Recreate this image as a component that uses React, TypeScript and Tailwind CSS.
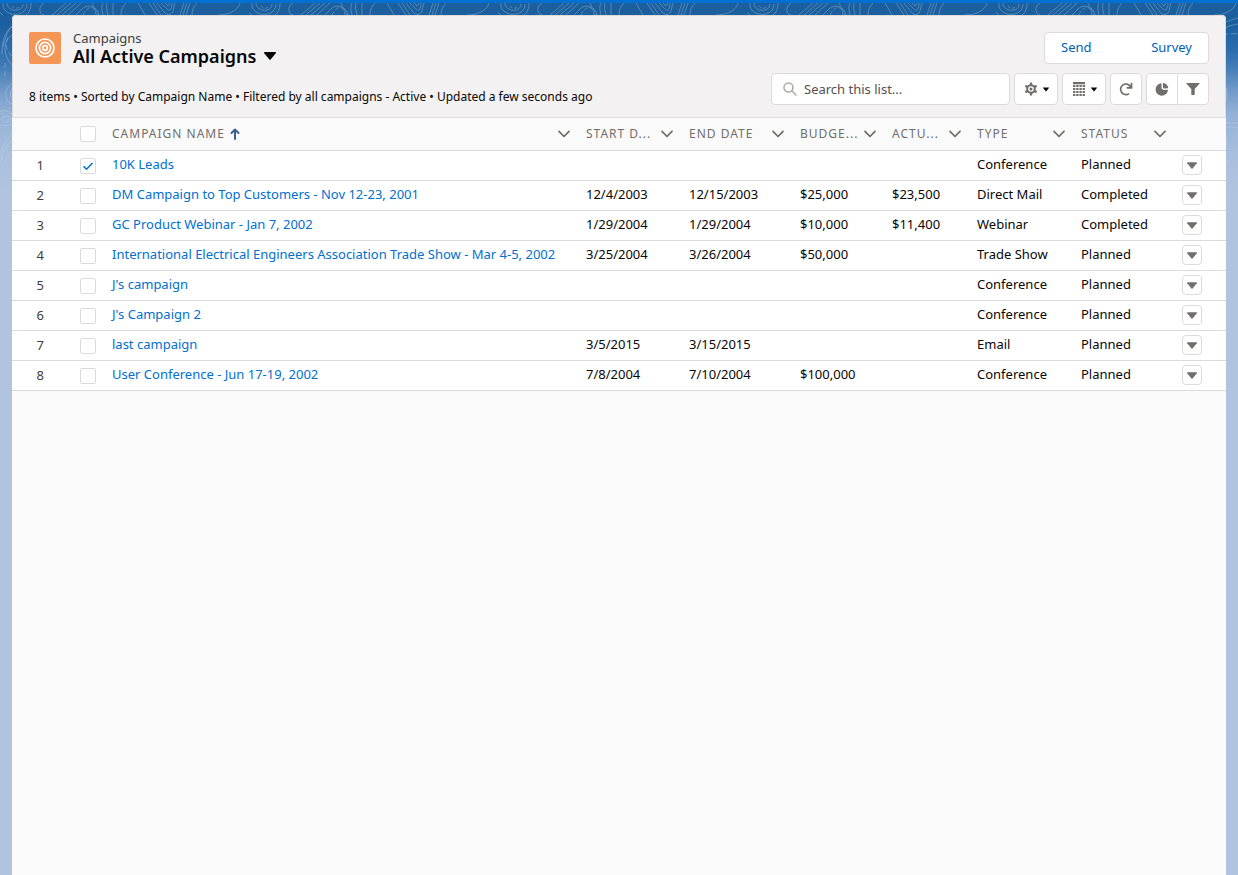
import { useState } from "react"

type Campaign = {
  name: string
  start?: string
  end?: string
  budgeted?: string
  actual?: string
  type: string
  status: string
}

const CAMPAIGNS: Campaign[] = [
  { name: "10K Leads", type: "Conference", status: "Planned" },
  {
    name: "DM Campaign to Top Customers - Nov 12-23, 2001",
    start: "12/4/2003",
    end: "12/15/2003",
    budgeted: "$25,000",
    actual: "$23,500",
    type: "Direct Mail",
    status: "Completed",
  },
  {
    name: "GC Product Webinar - Jan 7, 2002",
    start: "1/29/2004",
    end: "1/29/2004",
    budgeted: "$10,000",
    actual: "$11,400",
    type: "Webinar",
    status: "Completed",
  },
  {
    name: "International Electrical Engineers Association Trade Show - Mar 4-5, 2002",
    start: "3/25/2004",
    end: "3/26/2004",
    budgeted: "$50,000",
    type: "Trade Show",
    status: "Planned",
  },
  { name: "J's campaign", type: "Conference", status: "Planned" },
  { name: "J's Campaign 2", type: "Conference", status: "Planned" },
  { name: "last campaign", start: "3/5/2015", end: "3/15/2015", type: "Email", status: "Planned" },
  {
    name: "User Conference - Jun 17-19, 2002",
    start: "7/8/2004",
    end: "7/10/2004",
    budgeted: "$100,000",
    type: "Conference",
    status: "Planned",
  },
]

const COLUMNS = [
  { label: "Campaign Name", width: "", sorted: true },
  { label: "Start D...", width: "w-[103px]" },
  { label: "End Date", width: "w-[111px]" },
  { label: "Budge...", width: "w-[92px]" },
  { label: "Actu...", width: "w-[85px]" },
  { label: "Type", width: "w-[104px]" },
  { label: "Status", width: "w-[101px]" },
]

const BUTTON = "flex h-8 items-center justify-center rounded border border-[#dddbda] bg-white text-[#706e6b]"

function Topography() {
  return (
    <svg className="absolute inset-x-0 top-0 h-[220px] w-full" aria-hidden>
      <defs>
        <pattern id="topo" width="249" height="220" patternUnits="userSpaceOnUse">
          <g fill="none" stroke="#ffffff" strokeOpacity="0.3" strokeWidth="0.8">
            <path d="M3 0c-2 14 24 16 24 1M7 0c0 9 16 10 16 1M31 0c0 6-2 10-5 12M-2 5c1 4 3 6 5 7" />
            <path d="M12 3c2 3 6 3 8 0" strokeDasharray="3 2" />
            <path d="M44 0c-7 4-4 12 0 12M52 12 66 0M57 12 71 0M62 12 76 0M68 12 81 0M76 12l5-5c6-7 16-4 18 5" />
            <path d="M83 12c4-9 12-11 13 0M92 0l6 12" strokeDasharray="4 2" />
            <path d="M103 0c-2 4-1 8 0 12M107 0c-1 4 0 8 1 12M113 0v12M126 0c-4 4-5 8-5 12M138 0l7 12" />
            <path d="M149 0l8 12M153 0l8 12M157 0l7 9c4 4 7 3 9-1l2-8M161 0l6 6c3 3 5 0 5-6M165 0l3 3 2-3" />
            <path d="M184 0l-4 12M187 0l-4 12M190 0l-4 12M197 0c-3 3-5 7-5 12M218 12c10 0 20-4 22-12" />
            <path d="M3 44c3-14 7-22 15-22M2 52c0-12 2-22 9-28 5-4 9-1 9 4M12 62C2 52 3 36 13 32" />
            <path d="M5 60v16M8 34c-4 8-1 15 5 20" strokeDasharray="5 3" />
            <path d="M14 80c-6 2-9 8-8 14 1 5 4 7 8 7M14 84c-4 3-5 9-1 12" />
            <ellipse cx="6" cy="116" rx="4" ry="3" />
            <path d="M-3 110c6-4 14-3 16 4s-5 10-16 8M1 154c1-10 5-18 12-24M1 160c2-12 6-19 12-23M3 166c2-8 5-14 10-20M5 192c2-6 5-9 9-11" />
            <path d="M218 26c9-6 17-10 29-12M218 32c8-7 18-11 31-12M219 44c8-6 12 0 10 5s-9 6-12 2M220 65c8 8 11 20 11 31l-12 16" />
            <path d="M219 38c6-7 18-9 29-6" strokeDasharray="6 3" />
            <path d="M219 120h28M220 126c8-3 19-3 28 1M219 134c6-3 11-2 12 3s-6 9-12 6M220 160c4-6 14-5 14 4M219 178c5-4 10-2 11 4" />
          </g>
        </pattern>
        <linearGradient id="topo-fade" x1="0" y1="0" x2="0" y2="1">
          <stop offset="0.3" stopColor="#b0c4df" stopOpacity="0" />
          <stop offset="1" stopColor="#b0c4df" />
        </linearGradient>
      </defs>
      <rect width="100%" height="220" fill="url(#topo)" />
      <rect width="100%" height="220" fill="url(#topo-fade)" />
    </svg>
  )
}

function Caret({ className }: { className: string }) {
  return (
    <svg className={className} viewBox="0 0 12 8" fill="currentColor" aria-hidden>
      <path d="M.8 0h10.400c.7 0 1 .7.6 1.200L6.600 7.600a.8.8 0 0 1-1.200 0L.2 1.200C-.2.7.1 0 .8 0Z" />
    </svg>
  )
}

function Chevron() {
  return (
    <svg className="h-3 w-3 shrink-0" viewBox="0 0 12 12" fill="none" stroke="#706e6b" strokeWidth="1.700" strokeLinecap="round" strokeLinejoin="round" aria-hidden>
      <path d="M1 3.300 6 8.500l5-5.200" />
    </svg>
  )
}

function CampaignIcon() {
  return (
    <svg className="h-8 w-8 shrink-0 rounded-[2px] bg-[#f49756]" viewBox="0 0 32 32" fill="none" stroke="#fff" aria-hidden>
      <circle cx="16" cy="16" r="9" strokeWidth="1.700" />
      <circle cx="16" cy="16" r="5.600" strokeWidth="1.700" />
      <circle cx="16" cy="16" r="2.300" strokeWidth="1.700" />
    </svg>
  )
}

function GearIcon() {
  return (
    <svg className="h-[14px] w-[14px]" viewBox="0 0 14 14" fill="none" stroke="currentColor" aria-hidden>
      <path d="M7 .5v2.500M7 11v2.500M1.400 3.800l2 1.200M10.600 9l2 1.200M1.400 10.200l2-1.200M10.600 5l2-1.200" strokeWidth="2.200" />
      <circle cx="7" cy="7" r="3.800" strokeWidth="2" />
      <circle cx="7" cy="7" r="1.500" fill="currentColor" stroke="none" />
    </svg>
  )
}

function TableIcon() {
  return (
    <svg className="h-[14px] w-[14px]" viewBox="0 0 14 14" fill="currentColor" aria-hidden>
      <rect x="1" y="0" width="12" height="2.200" rx=".4" />
      {[3, 6, 9, 12].map((y) =>
        [1, 4.2, 7.4, 10.6].map((x) => <rect key={`${x}-${y}`} x={x} y={y} width="2.400" height="1.900" rx=".3" />),
      )}
    </svg>
  )
}

function RefreshIcon() {
  return (
    <svg className="h-[14px] w-[14px]" viewBox="0 0 14 14" fill="none" stroke="currentColor" strokeWidth="1.700" aria-hidden>
      <path d="M10 11.600A5.300 5.300 0 1 1 11.400 4.500" />
      <path d="M12.500.8v5H7.700" />
      <path d="M9.200 5.600 12.300 2.600v3Z" fill="currentColor" stroke="none" />
    </svg>
  )
}

function ChartIcon() {
  return (
    <svg className="h-[14px] w-[14px]" viewBox="0 0 14 14" fill="currentColor" aria-hidden>
      <path d="M6 1.300a6.200 6.200 0 1 0 6.900 7.200.6.6 0 0 0-.6-.7L8.600 8 6.500 6.500V1.800A.5.5 0 0 0 6 1.300Z" />
      <path d="M8 .9c2.700.2 4.900 2.100 5.200 4.700a.5.5 0 0 1-.5.600L8.600 6.500 11 3.500 8 6V1Z" />
      <path d="M8 1v5l.6.5 3-3Z" />
    </svg>
  )
}

function FilterIcon() {
  return (
    <svg className="h-[14px] w-[14px]" viewBox="0 0 14 14" fill="currentColor" aria-hidden>
      <path d="M.9 1h12.200c.4 0 .6.5.3.8L8.700 7v5.500c0 .3-.2.500-.5.500H5.800c-.3 0-.5-.2-.5-.5V7L.6 1.800C.3 1.500.5 1 .9 1Z" />
    </svg>
  )
}

function Checkbox({ label, checked, onChange }: { label: string; checked: boolean; onChange: () => void }) {
  return (
    <label className="relative block h-4 w-4">
      <input
        type="checkbox"
        aria-label={label}
        checked={checked}
        onChange={onChange}
        className="block h-4 w-4 appearance-none rounded-[2px] border border-[#dddbda] bg-white"
      />
      {checked ? (
        <svg className="pointer-events-none absolute inset-0 h-4 w-4" viewBox="0 0 16 16" fill="none" stroke="#0070d2" strokeWidth="1.500" aria-hidden>
          <path d="m3.500 8.300 3 3 6-6.300" />
        </svg>
      ) : null}
    </label>
  )
}

function ListHeader() {
  return (
    <header className="flex justify-between rounded-t border border-[#dddbda] bg-[#f3f1f2] px-4 pt-4 pb-3">
      <div className="flex flex-col justify-between">
        <div className="flex gap-3">
          <CampaignIcon />
          <div>
            <p className="text-[13px] leading-3 text-[#3e3e3c]">Campaigns</p>
            <h1>
              <button type="button" className="flex items-center gap-2 text-lg leading-6 font-semibold text-[#080707]">
                All Active Campaigns
                <Caret className="h-2 w-3" />
              </button>
            </h1>
          </div>
        </div>
        <p className="text-xs leading-4 text-[#080707]">
          8 items • Sorted by Campaign Name • Filtered by all campaigns - Active • Updated a few seconds ago
        </p>
      </div>

      <div className="flex flex-col items-end gap-[9px]">
        <div className="flex h-8 w-[165px] justify-between rounded border border-[#dddbda] bg-white text-[13px] text-[#005fb2]">
          <button type="button" className="px-4">Send</button>
          <button type="button" className="px-4">Survey</button>
        </div>
        <div className="flex gap-1">
          <div className="relative">
            <svg className="absolute top-[9px] left-3 h-[14px] w-[14px]" viewBox="0 0 14 14" fill="none" stroke="#b0adab" strokeWidth="1.600" strokeLinecap="round" aria-hidden>
              <circle cx="5.500" cy="5.500" r="4.500" />
              <path d="m9 9 4 4" />
            </svg>
            <input
              type="search"
              aria-label="Search this list"
              placeholder="Search this list..."
              className="h-8 w-[239px] rounded border border-[#dddbda] bg-white pr-3 pl-8 text-[13px] placeholder:text-[#54514f]"
            />
          </div>
          <button type="button" aria-label="List view controls" className={`${BUTTON} w-11 gap-[5px]`}>
            <GearIcon />
            <Caret className="h-[5px] w-[6px] text-[#080707]" />
          </button>
          <button type="button" aria-label="Display as table" className={`${BUTTON} w-11 gap-[5px]`}>
            <TableIcon />
            <Caret className="h-[5px] w-[6px] text-[#080707]" />
          </button>
          <button type="button" aria-label="Refresh" className={`${BUTTON} w-8`}>
            <RefreshIcon />
          </button>
          <div className="flex">
            <button type="button" aria-label="Show charts" className={`${BUTTON} w-8 rounded-r-none`}>
              <ChartIcon />
            </button>
            <button type="button" aria-label="Show filters" className={`${BUTTON} -ml-px w-8 rounded-l-none`}>
              <FilterIcon />
            </button>
          </div>
        </div>
      </div>
    </header>
  )
}

export default function App() {
  const [selected, setSelected] = useState<number[]>([0])
  const allSelected = selected.length === CAMPAIGNS.length

  const toggle = (index: number) =>
    setSelected((current) =>
      current.includes(index) ? current.filter((item) => item !== index) : [...current, index],
    )

  return (
    <div className="relative flex min-h-screen flex-col border-t-3 border-[#0070d2] bg-[#b0c4df] bg-[linear-gradient(to_bottom,#1b5f9e_0px,#1b5f9e_20px,#2f6fae_50px,#87a8d2_110px,#b0c4df_190px)] px-3 pt-3 font-['Noto_Sans','Open_Sans',sans-serif]">
      <Topography />
      <main className="relative flex-1 overflow-hidden rounded-t bg-[#fafafa]">
        <ListHeader />
        <table className="w-full table-fixed border-collapse text-left text-[13px] text-[#080707]">
          <thead>
            <tr className="h-8 border-b border-[#dddbda] text-[#706e6b]">
              <th className="w-[60px]" aria-label="Row number" />
              <th className="w-8 pl-2">
                <Checkbox
                  label="Select all items"
                  checked={allSelected}
                  onChange={() => setSelected(allSelected ? [] : CAMPAIGNS.map((_, index) => index))}
                />
              </th>
              {COLUMNS.map((column) => (
                <th key={column.label} className={`${column.width} px-2 font-normal`}>
                  <div className="flex items-center justify-between">
                    <span className="flex items-center gap-1 text-xs tracking-[1px] whitespace-nowrap uppercase">
                      {column.label}
                      {column.sorted ? (
                        <svg className="h-3 w-3" viewBox="0 0 12 12" fill="none" stroke="#3f5f91" strokeWidth="2" strokeLinecap="round" strokeLinejoin="round" aria-hidden>
                          <path d="M6 11V1.500M2.500 5 6 1.500 9.500 5" />
                        </svg>
                      ) : null}
                    </span>
                    <Chevron />
                  </div>
                </th>
              ))}
              <th className="w-[52px]" aria-label="Actions" />
            </tr>
          </thead>
          <tbody className="bg-white">
            {CAMPAIGNS.map((campaign, index) => (
              <tr key={campaign.name} className="h-[30px] border-b border-[#dddbda]">
                <td className="pt-px pr-7 text-right text-[#3e3e3c]">{index + 1}</td>
                <td className="pt-px pl-2">
                  <Checkbox
                    label={`Select ${campaign.name}`}
                    checked={selected.includes(index)}
                    onChange={() => toggle(index)}
                  />
                </td>
                <td className="truncate px-2">
                  <a href="#" className="text-[#0070d2]">{campaign.name}</a>
                </td>
                <td className="px-2">{campaign.start}</td>
                <td className="px-2">{campaign.end}</td>
                <td className="px-2">{campaign.budgeted}</td>
                <td className="px-2">{campaign.actual}</td>
                <td className="px-2">{campaign.type}</td>
                <td className="px-2">{campaign.status}</td>
                <td className="px-2">
                  <button
                    type="button"
                    aria-label={`Show actions for ${campaign.name}`}
                    className="flex h-5 w-5 items-center justify-center rounded border border-[#dddbda] bg-white text-[#706e6b]"
                  >
                    <Caret className="h-[7px] w-[10px]" />
                  </button>
                </td>
              </tr>
            ))}
          </tbody>
        </table>
      </main>
    </div>
  )
}
